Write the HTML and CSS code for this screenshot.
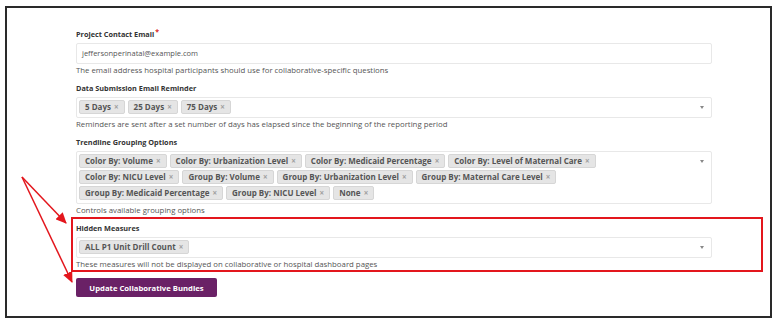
FILE: index.html
```html
<!DOCTYPE html>
<html lang="en">
<head>
    <meta charset="UTF-8">
    <meta name="viewport" content="width=device-width, initial-scale=1.0">
    <title>Collaborative Settings</title>
    <link rel="stylesheet" href="styles.css">
</head>
<body>
    <div class="frame">
        <div class="form">
            <div class="field">
                <p class="label">Project Contact Email<span class="required">*</span></p>
                <div class="input">jeffersonperinatal@example.com</div>
                <p class="help">The email address hospital participants should use for collaborative-specific questions</p>
            </div>

            <div class="field">
                <p class="label">Data Submission Email Reminder</p>
                <div class="select">
                    <div class="tags">
                        <span class="tag">5 Days <span class="x">&times;</span></span>
                        <span class="tag">25 Days <span class="x">&times;</span></span>
                        <span class="tag">75 Days <span class="x">&times;</span></span>
                    </div>
                    <span class="caret"></span>
                </div>
                <p class="help">Reminders are sent after a set number of days has elapsed since the beginning of the reporting period</p>
            </div>

            <div class="field">
                <p class="label">Trendline Grouping Options</p>
                <div class="select">
                    <div class="tags">
                        <span class="tag">Color By: Volume <span class="x">&times;</span></span>
                        <span class="tag">Color By: Urbanization Level <span class="x">&times;</span></span>
                        <span class="tag">Color By: Medicaid Percentage <span class="x">&times;</span></span>
                        <span class="tag">Color By: Level of Maternal Care <span class="x">&times;</span></span>
                        <span class="tag">Color By: NICU Level <span class="x">&times;</span></span>
                        <span class="tag">Group By: Volume <span class="x">&times;</span></span>
                        <span class="tag">Group By: Urbanization Level <span class="x">&times;</span></span>
                        <span class="tag">Group By: Maternal Care Level <span class="x">&times;</span></span>
                        <span class="tag">Group By: Medicaid Percentage <span class="x">&times;</span></span>
                        <span class="tag">Group By: NICU Level <span class="x">&times;</span></span>
                        <span class="tag">None <span class="x">&times;</span></span>
                    </div>
                    <span class="caret"></span>
                </div>
                <p class="help">Controls available grouping options</p>
            </div>

            <div class="field highlight">
                <p class="label">Hidden Measures</p>
                <div class="select">
                    <div class="tags">
                        <span class="tag">ALL P1 Unit Drill Count <span class="x">&times;</span></span>
                    </div>
                    <span class="caret"></span>
                </div>
                <p class="help">These measures will not be displayed on collaborative or hospital dashboard pages</p>
            </div>

            <button class="submit-button">Update Collaborative Bundles</button>
        </div>
    </div>

    <svg class="arrows" width="781" height="328" viewBox="0 0 781 328">
        <defs>
            <marker id="head" markerWidth="11" markerHeight="10" refX="10" refY="5" orient="auto" markerUnits="userSpaceOnUse">
                <path d="M0,0 L11,5 L0,10 Z" fill="#e3161d"/>
            </marker>
        </defs>
        <line x1="22" y1="177" x2="66" y2="223" stroke="#e3161d" stroke-width="1.5" marker-end="url(#head)"/>
        <line x1="22" y1="177" x2="72" y2="282" stroke="#e3161d" stroke-width="1.5" marker-end="url(#head)"/>
    </svg>
</body>
</html>
```

FILE: styles.css
```css
body {
    margin: 0;
    background-color: white;
    font-family: "Open Sans", "Liberation Sans", sans-serif;
    position: relative;
    width: 781px;
    height: 328px;
    overflow: hidden;
}
.frame {
    box-sizing: border-box;
    margin: 6px 0 0 5px;
    width: 767px;
    height: 312px;
    border: 2px solid #2a2a2a;
    padding: 20px 0 0 69px;
}
.form {
    width: 636px;
}
.field {
    margin-bottom: 6px;
}
.label {
    margin: 0 0 3px 0;
    font-size: 7.3px;
    line-height: 12px;
    font-weight: bold;
    color: #333;
}
.required {
    color: #d9261c;
    font-size: 7px;
    line-height: 0;
    vertical-align: 3px;
    margin-left: 1px;
}
.help {
    margin: 0;
    font-size: 7.8px;
    line-height: 12px;
    color: #555;
}
.input {
    box-sizing: border-box;
    height: 21px;
    border: 1px solid #e8e8e8;
    border-radius: 2px;
    padding-left: 5px;
    font-size: 7.5px;
    line-height: 19px;
    color: #555;
}
.select {
    display: flex;
    align-items: flex-start;
    box-sizing: border-box;
    min-height: 21px;
    border: 1px solid #e8e8e8;
    border-radius: 2px;
    padding: 2px 0 3px 2px;
}
.tags {
    flex: 1;
    display: flex;
    flex-wrap: wrap;
    gap: 2px 3px;
}
.tag {
    box-sizing: border-box;
    height: 14px;
    padding: 0 5px;
    background-color: #e5e5e5;
    border: 1px solid #d6d6d6;
    border-radius: 2px;
    font-size: 8px;
    line-height: 12px;
    font-weight: bold;
    color: #555;
    white-space: nowrap;
}
.x {
    color: #a0a0a0;
    margin-left: 1px;
}
.caret {
    width: 0;
    height: 0;
    margin: 6px 7px 0 12px;
    border-left: 2.5px solid transparent;
    border-right: 2.5px solid transparent;
    border-top: 3px solid #888;
}
.highlight {
    border: 2px solid #e3161d;
    margin: -5px -51px 0 -5px;
    padding: 3px 49px 0 3px;
}
.submit-button {
    margin-top: 6px;
    height: 19px;
    width: 141px;
    padding: 0;
    background-color: #6a2166;
    border: none;
    border-radius: 2px;
    color: white;
    font-family: "Open Sans", "Liberation Sans", sans-serif;
    font-size: 7.7px;
    font-weight: bold;
    cursor: pointer;
}
.arrows {
    position: absolute;
    top: 0;
    left: 0;
    pointer-events: none;
}
```
